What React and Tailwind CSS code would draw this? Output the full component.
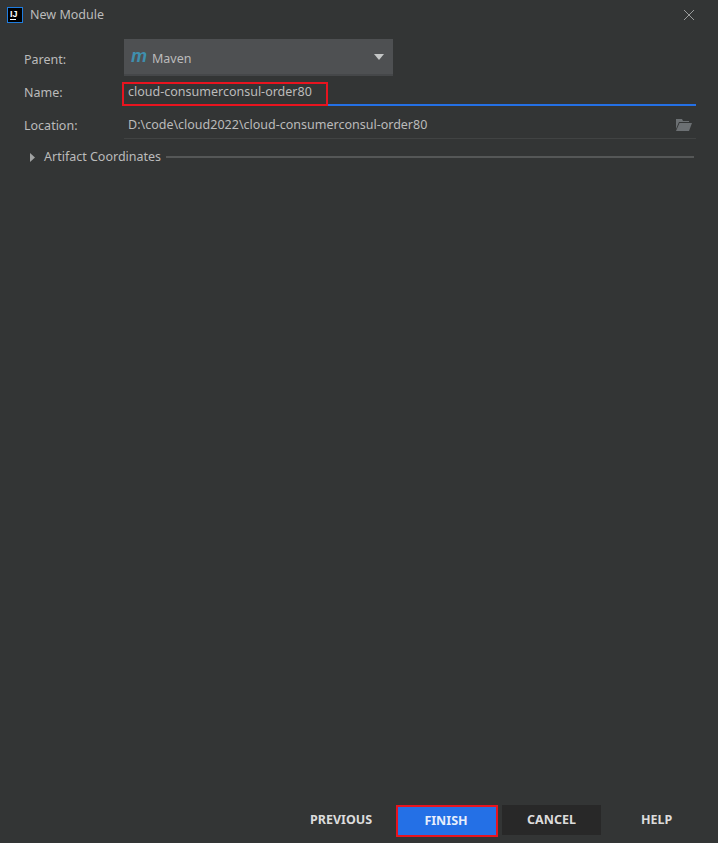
import React from "react";

const font = { fontFamily: '"Noto Sans", "Open Sans", sans-serif' };

function Row({ label, children, className = "", labelClass = "" }) {
  return (
    <div className={`flex items-center ${className}`}>
      <div className={`w-[124px] shrink-0 pl-6 text-[12.5px] text-[#bbbbbb] ${labelClass}`}>{label}</div>
      {children}
    </div>
  );
}

export default function App() {
  return (
    <div style={font} className="w-[718px] h-[843px] bg-[#333535] flex flex-col overflow-hidden">
      <header className="h-[29px] shrink-0 flex items-center pl-[7px] pr-[23px]">
        <svg width="16" height="16" viewBox="0 0 16 16" className="shrink-0">
          <rect x="0.5" y="0.5" width="15" height="15" fill="#000" stroke="#1f7de0" />
          <text x="3" y="9.5" fontSize="9" fontWeight="700" fill="#fff" fontFamily="Liberation Sans">IJ</text>
          <rect x="3" y="12" width="6" height="1" fill="#fff" />
        </svg>
        <span className="ml-[7px] pt-[2px] text-[12.5px] text-[#bbbbbb]">New Module</span>
        <svg width="12" height="12" viewBox="0 0 12 12" className="ml-auto" stroke="#9a9c9c" fill="none">
          <path d="M1 1l10 10M11 1L1 11" />
        </svg>
      </header>

      <main className="flex-1 flex flex-col pt-[10px]">
        <Row label="Parent:" className="h-[37px]" labelClass="pt-[6px]">
          <div className="w-[269px] h-[37px] bg-[#4e5052] border-b-2 border-[#454749] flex items-center pl-[7px] pr-[9px]">
            <span className="text-[#3f8fae] text-[18px] leading-none font-bold italic w-[21px] -mt-[1px]" style={{ fontFamily: '"Liberation Sans", sans-serif' }}>m</span>
            <span className="pt-[6px] text-[12.5px] text-[#bbbbbb]">Maven</span>
            <svg width="10" height="6" viewBox="0 0 10 6" className="ml-auto"><path d="M0 0h10L5 6z" fill="#c4c6c6" /></svg>
          </div>
        </Row>

        <Row label="Name:" className="h-[30px]" labelClass="pt-[5px]">
          <div className="relative flex-1 mr-[22px] h-[30px] border-b-2 border-[#2470e6] flex items-center pl-1 pt-[5px]">
            <span className="text-[12.5px] text-[#bbbbbb]">cloud-consumerconsul-order80</span>
            <div className="absolute left-[-2px] top-[6px] w-[206px] h-[24px] border-2 border-[#e8141f]" />
          </div>
        </Row>

        <Row label="Location:" className="h-[33px]" labelClass="pt-[7px]">
          <div className="flex-1 mr-[22px] h-[33px] border-b border-[#414343] flex items-center justify-between pl-1 pr-[4px] pt-[7px]">
            <span className="text-[12.5px] text-[#bbbbbb]">D:\code\cloud2022\cloud-consumerconsul-order80</span>
            <svg width="16" height="12" viewBox="0 0 16 12" className="-mt-[1px]">
              <path d="M0 0h6l1 2h6v1H3L0 10z" fill="#6c7073" />
              <path d="M3.5 4H16l-3 8H0z" fill="#6c7073" />
            </svg>
          </div>
        </Row>

        <div className="flex items-center h-[36px] pl-[30px] pr-6">
          <svg width="5" height="9" viewBox="0 0 5 9" className="shrink-0"><path d="M0 0l5 4.5-5 4.5z" fill="#a0a2a2" /></svg>
          <span className="ml-[9px] text-[12.5px] text-[#bbbbbb]">Artifact Coordinates</span>
          <div className="ml-[5px] flex-1 h-[2px] bg-[#555757]" />
        </div>
      </main>

      <footer className="h-[32px] mb-[6px] shrink-0 flex items-start text-[12.5px] font-bold text-[#dcdcdc]">
        <button className="ml-[310px] w-[62px] h-[30px] text-left">PREVIOUS</button>
        <button className="ml-6 w-[102px] h-[32px] bg-[#2470e6] border-2 border-[#e8141f] text-[#e6eefc] pr-[2px]">FINISH</button>
        <button className="ml-1 w-[99px] h-[30px] bg-[#282828]">CANCEL</button>
        <button className="ml-[40px] h-[30px]">HELP</button>
      </footer>
    </div>
  );
}
